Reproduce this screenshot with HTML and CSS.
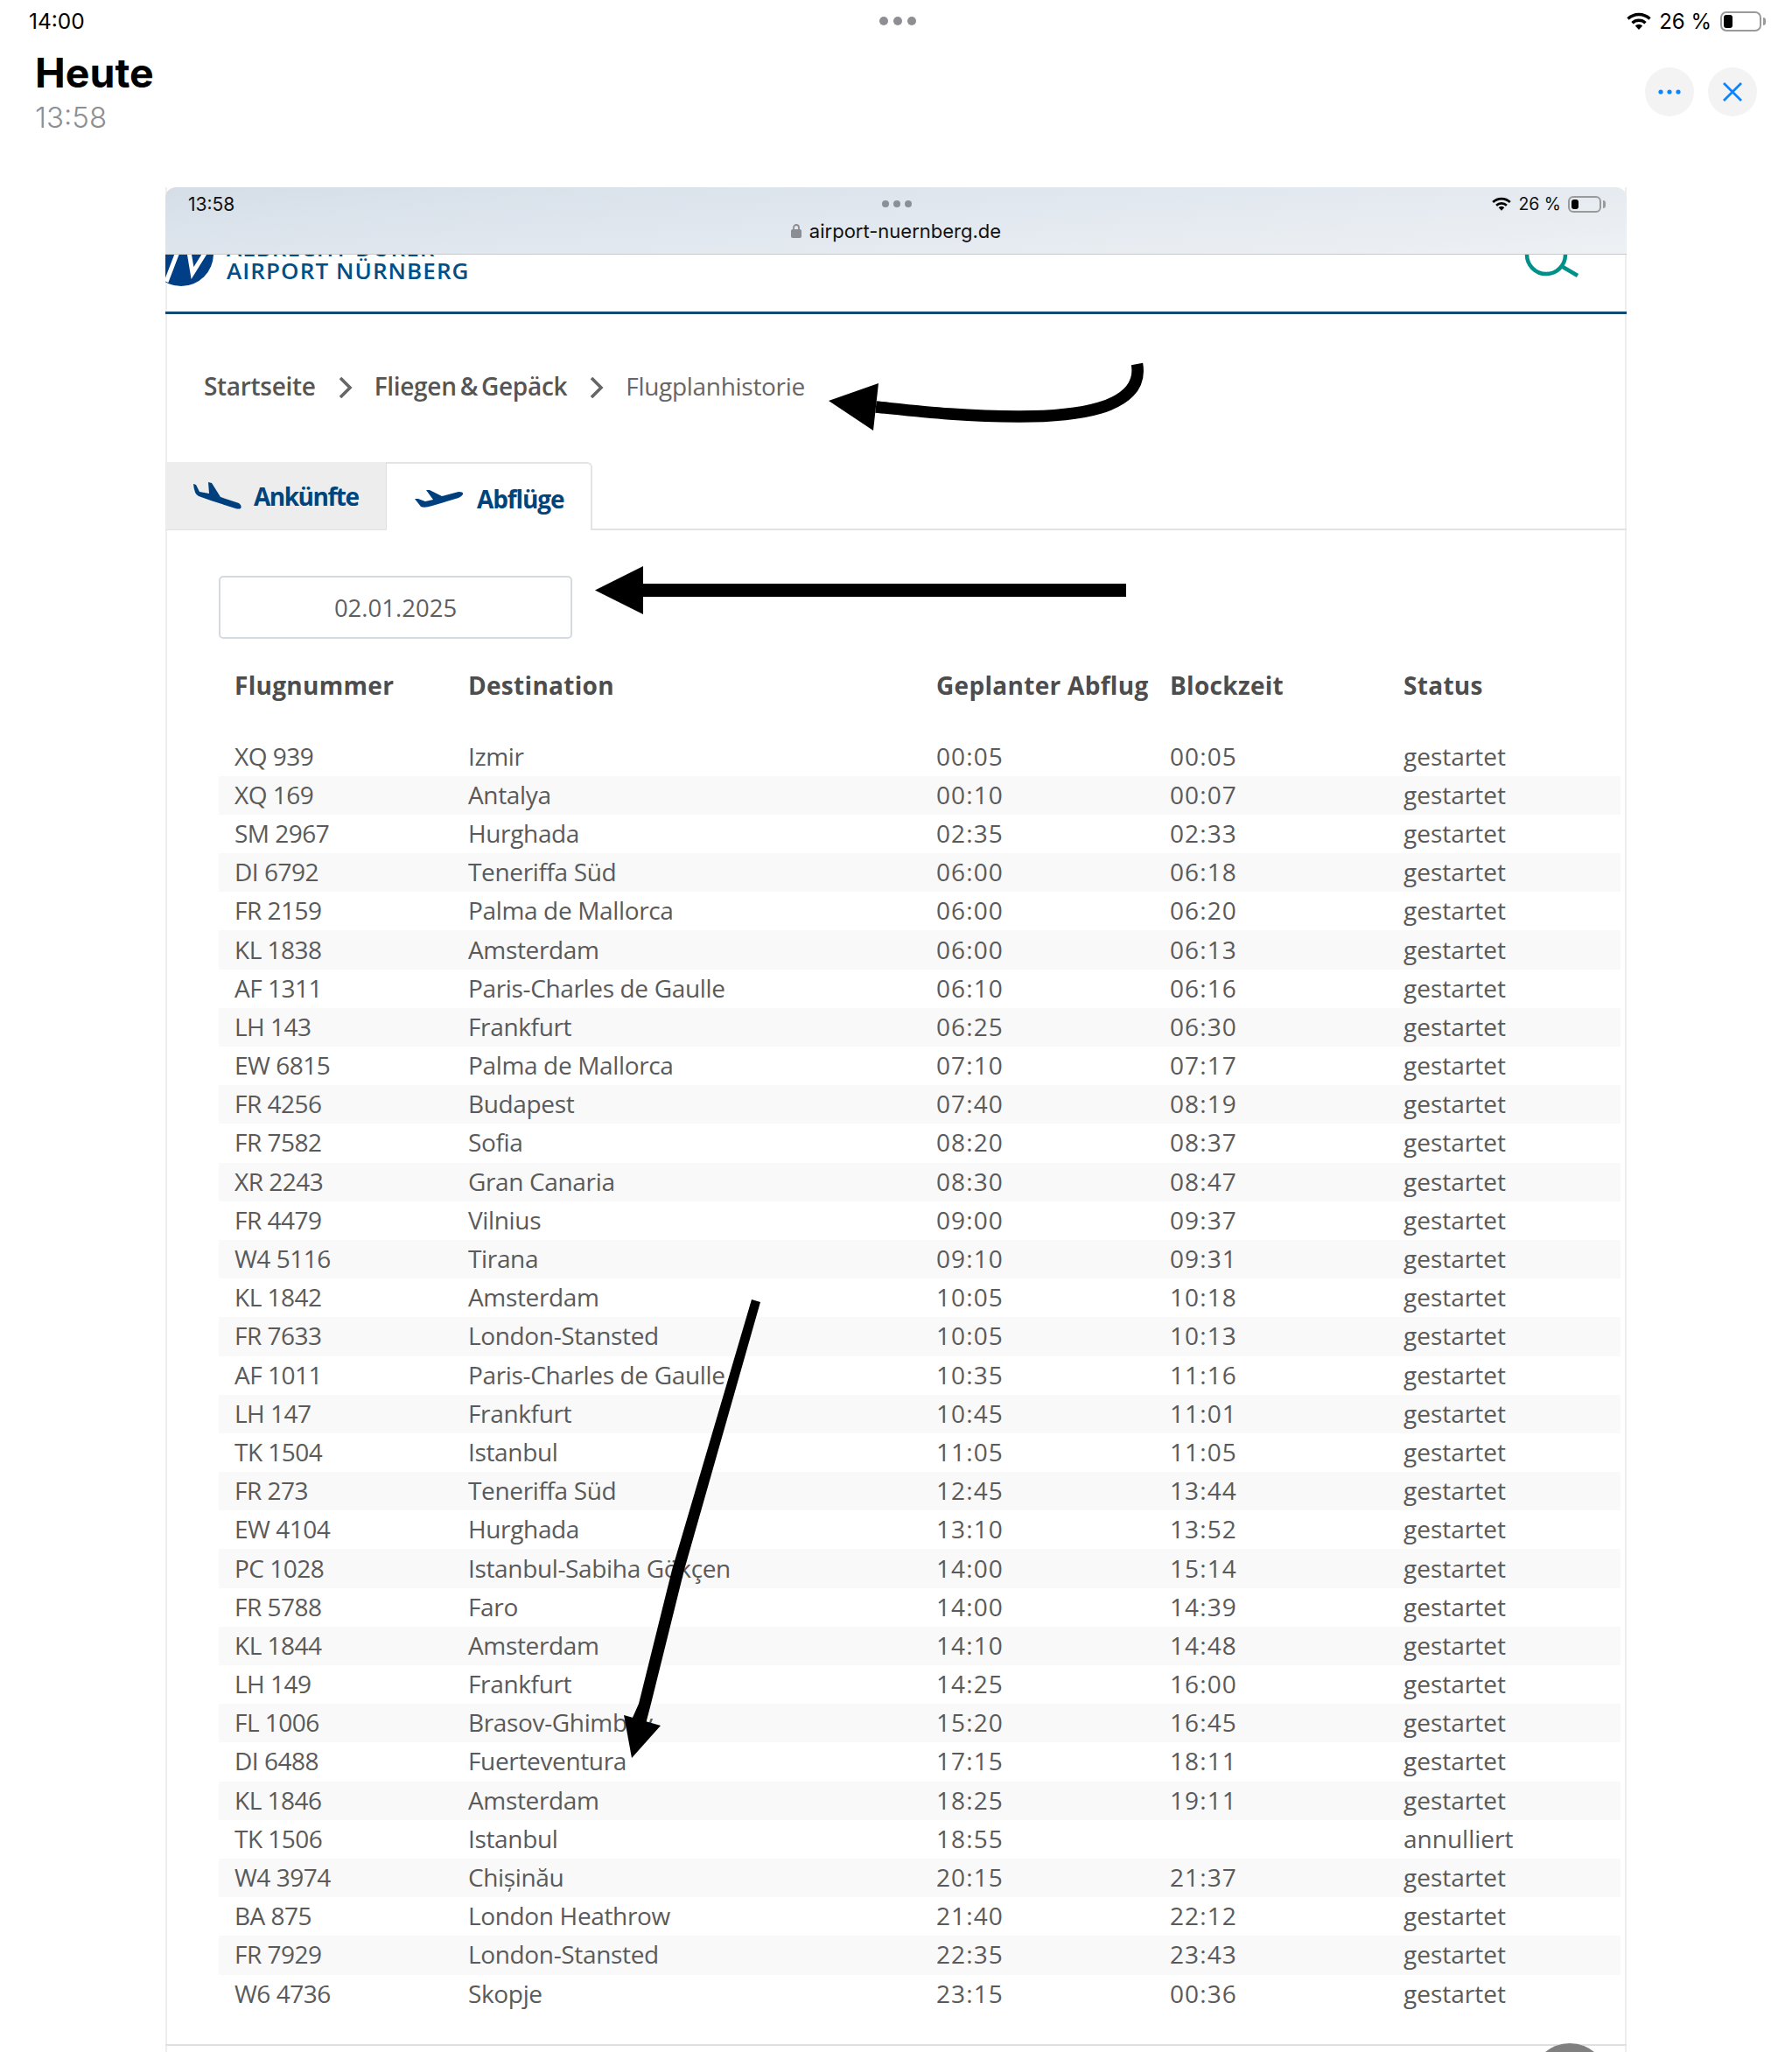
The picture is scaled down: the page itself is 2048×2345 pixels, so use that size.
FILE: index.html
```html
<!DOCTYPE html>
<html lang="de">
<head>
<meta charset="utf-8">
<title>Heute</title>
<link rel="stylesheet" href="styles.css">
</head>
<body>
<div class="status">
  <span class="status-time">14:00</span>
  <span class="dots"><i></i><i></i><i></i></span>
  <span class="status-right">
    <svg class="wifi" viewBox="0 0 28 20"><path d="M1.5 7.5a18 18 0 0 1 25 0M6.5 12.2a11 11 0 0 1 15 0" fill="none" stroke="#000" stroke-width="3.4"/><path d="M14 20l-4.2-4.6a6.4 6.4 0 0 1 8.4 0z" fill="#000"/></svg>
    <span class="pct">26 %</span>
    <span class="battery"><i></i></span>
  </span>
</div>
<header class="head">
  <div>
    <h1 class="title">Heute</h1>
    <div class="subtime">13:58</div>
  </div>
  <div class="actions">
    <button class="round">
      <svg class="ic" viewBox="0 0 26 6"><circle cx="3" cy="3" r="2.6"/><circle cx="13" cy="3" r="2.6"/><circle cx="23" cy="3" r="2.6"/></svg>
    </button>
    <button class="round">
      <svg class="ic-x" viewBox="0 0 22 22"><path d="M1 1l20 20M21 1L1 21"/></svg>
    </button>
  </div>
</header>

<main class="panel">
  <div class="bar">
    <div class="bar-status">
      <span class="bar-time">13:58</span>
      <span class="dots dots-small"><i></i><i></i><i></i></span>
      <span class="bar-right">
        <svg class="wifi-small" viewBox="0 0 28 20"><path d="M1.5 7.5a18 18 0 0 1 25 0M6.5 12.2a11 11 0 0 1 15 0" fill="none" stroke="#000" stroke-width="3.4"/><path d="M14 20l-4.2-4.6a6.4 6.4 0 0 1 8.4 0z" fill="#000"/></svg>
        <span class="pct-small">26 %</span>
        <span class="battery battery-small"><i></i></span>
      </span>
    </div>
    <div class="url">
      <svg class="lock" viewBox="0 0 12 17"><path d="M3 8V5a3 3 0 0 1 6 0v3" fill="none" stroke="#8a8d92" stroke-width="1.8"/><rect x="0" y="7" width="12" height="10" rx="2" fill="#8a8d92"/></svg>
      <span>airport-nuernberg.de</span>
    </div>
  </div>

  <div class="site-head">
    <svg class="logo" viewBox="189 291 56 37">
      <circle cx="207" cy="290" r="37" fill="#003f85"/>
      <path d="M203 288L190 322M216 288L220 312L235 288" fill="none" stroke="#fff" stroke-width="5"/>
    </svg>
    <div class="logo-text">
      <div class="logo-top">ALBRECHT DÜRER</div>
      <div class="logo-main">AIRPORT NÜRNBERG</div>
    </div>
    <svg class="search" viewBox="1740 291 66 26"><circle cx="1767" cy="291" r="22" fill="none" stroke="#00908a" stroke-width="4.5"/><path d="M1786 305L1803 315" fill="none" stroke="#00908a" stroke-width="4.5"/></svg>
  </div>

  <nav class="crumbs">
    <a class="crumb">Startseite</a>
    <svg class="chev" viewBox="0 0 16 24"><path d="M2 1l11 11L2 23"/></svg>
    <a class="crumb">Fliegen &amp; Gepäck</a>
    <svg class="chev" viewBox="0 0 16 24"><path d="M2 1l11 11L2 23"/></svg>
    <span class="crumb-current">Flugplanhistorie</span>
  </nav>

  <div class="tabs">
    <div class="tab tab-off">
      <svg class="plane" viewBox="219 551 58 33"><path d="M220 554L223 555L227 563L238 565L237 552L241 553L251 569L272 576Q276 579 274 582Q272 583 268 582L240 573L226 568Q221 566 220 554Z"/></svg>
      <span>Ankünfte</span>
    </div>
    <div class="tab tab-on">
      <svg class="plane" viewBox="473 557 58 24"><path d="M474 569L478 569L486 572L495 570L487 559L491 559L505 566L524 561Q530 561 529 564Q528 566 524 568L494 577Q485 580 481 578Z"/></svg>
      <span>Abflüge</span>
    </div>
  </div>

  <section class="content">
    <div class="date">02.01.2025</div>
    <div class="row row-head"><span>Flugnummer</span><span>Destination</span><span class="nowrap">Geplanter Abflug</span><span>Blockzeit</span><span>Status</span></div>
    <div class="rows">
      <div class="row"><span>XQ 939</span><span>Izmir</span><span>00:05</span><span>00:05</span><span>gestartet</span></div>
      <div class="row"><span>XQ 169</span><span>Antalya</span><span>00:10</span><span>00:07</span><span>gestartet</span></div>
      <div class="row"><span>SM 2967</span><span>Hurghada</span><span>02:35</span><span>02:33</span><span>gestartet</span></div>
      <div class="row"><span>DI 6792</span><span>Teneriffa Süd</span><span>06:00</span><span>06:18</span><span>gestartet</span></div>
      <div class="row"><span>FR 2159</span><span>Palma de Mallorca</span><span>06:00</span><span>06:20</span><span>gestartet</span></div>
      <div class="row"><span>KL 1838</span><span>Amsterdam</span><span>06:00</span><span>06:13</span><span>gestartet</span></div>
      <div class="row"><span>AF 1311</span><span>Paris-Charles de Gaulle</span><span>06:10</span><span>06:16</span><span>gestartet</span></div>
      <div class="row"><span>LH 143</span><span>Frankfurt</span><span>06:25</span><span>06:30</span><span>gestartet</span></div>
      <div class="row"><span>EW 6815</span><span>Palma de Mallorca</span><span>07:10</span><span>07:17</span><span>gestartet</span></div>
      <div class="row"><span>FR 4256</span><span>Budapest</span><span>07:40</span><span>08:19</span><span>gestartet</span></div>
      <div class="row"><span>FR 7582</span><span>Sofia</span><span>08:20</span><span>08:37</span><span>gestartet</span></div>
      <div class="row"><span>XR 2243</span><span>Gran Canaria</span><span>08:30</span><span>08:47</span><span>gestartet</span></div>
      <div class="row"><span>FR 4479</span><span>Vilnius</span><span>09:00</span><span>09:37</span><span>gestartet</span></div>
      <div class="row"><span>W4 5116</span><span>Tirana</span><span>09:10</span><span>09:31</span><span>gestartet</span></div>
      <div class="row"><span>KL 1842</span><span>Amsterdam</span><span>10:05</span><span>10:18</span><span>gestartet</span></div>
      <div class="row"><span>FR 7633</span><span>London-Stansted</span><span>10:05</span><span>10:13</span><span>gestartet</span></div>
      <div class="row"><span>AF 1011</span><span>Paris-Charles de Gaulle</span><span>10:35</span><span>11:16</span><span>gestartet</span></div>
      <div class="row"><span>LH 147</span><span>Frankfurt</span><span>10:45</span><span>11:01</span><span>gestartet</span></div>
      <div class="row"><span>TK 1504</span><span>Istanbul</span><span>11:05</span><span>11:05</span><span>gestartet</span></div>
      <div class="row"><span>FR 273</span><span>Teneriffa Süd</span><span>12:45</span><span>13:44</span><span>gestartet</span></div>
      <div class="row"><span>EW 4104</span><span>Hurghada</span><span>13:10</span><span>13:52</span><span>gestartet</span></div>
      <div class="row"><span>PC 1028</span><span>Istanbul-Sabiha Gökçen</span><span>14:00</span><span>15:14</span><span>gestartet</span></div>
      <div class="row"><span>FR 5788</span><span>Faro</span><span>14:00</span><span>14:39</span><span>gestartet</span></div>
      <div class="row"><span>KL 1844</span><span>Amsterdam</span><span>14:10</span><span>14:48</span><span>gestartet</span></div>
      <div class="row"><span>LH 149</span><span>Frankfurt</span><span>14:25</span><span>16:00</span><span>gestartet</span></div>
      <div class="row"><span>FL 1006</span><span>Brasov-Ghimbav</span><span>15:20</span><span>16:45</span><span>gestartet</span></div>
      <div class="row"><span>DI 6488</span><span>Fuerteventura</span><span>17:15</span><span>18:11</span><span>gestartet</span></div>
      <div class="row"><span>KL 1846</span><span>Amsterdam</span><span>18:25</span><span>19:11</span><span>gestartet</span></div>
      <div class="row"><span>TK 1506</span><span>Istanbul</span><span>18:55</span><span></span><span>annulliert</span></div>
      <div class="row"><span>W4 3974</span><span>Chișinău</span><span>20:15</span><span>21:37</span><span>gestartet</span></div>
      <div class="row"><span>BA 875</span><span>London Heathrow</span><span>21:40</span><span>22:12</span><span>gestartet</span></div>
      <div class="row"><span>FR 7929</span><span>London-Stansted</span><span>22:35</span><span>23:43</span><span>gestartet</span></div>
      <div class="row"><span>W6 4736</span><span>Skopje</span><span>23:15</span><span>00:36</span><span>gestartet</span></div>
    </div>
  </section>
</main>

<svg class="marks" viewBox="0 0 2048 2345" width="2048" height="2345">
  <path d="M1299.5 416C1309 470 1220 476 1165 476C1100 476 1050 470 1001 465" fill="none" stroke="#000" stroke-width="13.5"/>
  <path d="M947 458L1004 438L998 492Z"/>
  <path d="M735 647V702L680 674.5Z"/>
  <rect x="733" y="667" width="554" height="15"/>
  <path d="M859 1485L869 1488L782 1794L744 1947L738 1970L722 1965L730 1947L768 1794Z"/>
  <path d="M713 1960L755 1972L722 2009Z"/>
  <circle class="fab" cx="1794" cy="2379" r="44"/>
</svg>
</body>
</html>
```

FILE: styles.css
```css
* { box-sizing: border-box; }
html, body { margin: 0; padding: 0; }
body {
  position: relative;
  width: 2048px;
  height: 2345px;
  overflow: hidden;
  background: #fff;
  font-family: "Open Sans", "Noto Sans", sans-serif;
  color: #5a5a5a;
}

/* device status */
.status {
  display: grid;
  grid-template-columns: 1fr auto 1fr;
  align-items: center;
  height: 48px;
  padding: 0 30px 0 33px;
  font-family: Inter, "Liberation Sans", sans-serif;
  color: #000;
}
.status-time { font-size: 24.5px; }
.status-right { display: flex; align-items: center; justify-content: flex-end; }
.wifi { width: 28px; height: 20px; margin-right: 9px; }
.pct { font-size: 24px; margin-right: 10px; white-space: nowrap; }
.dots { display: flex; gap: 6px; }
.dots i { width: 10px; height: 10px; border-radius: 50%; background: #8e8e93; }
.dots-small { gap: 5px; }
.dots-small i { width: 8px; height: 8px; background: #8a9098; }

.battery {
  position: relative;
  display: block;
  width: 47px;
  height: 23px;
  border: 2px solid #9a9a9a;
  border-radius: 7px;
  margin-right: 5px;
}
.battery i {
  position: absolute;
  left: 2px;
  top: 2px;
  bottom: 2px;
  width: 10px;
  background: #000;
  border-radius: 3px;
}
.battery::after {
  content: "";
  position: absolute;
  right: -7px;
  top: 5px;
  width: 3px;
  height: 9px;
  background: #9a9a9a;
  border-radius: 0 3px 3px 0;
}
.battery-small { width: 38px; height: 19px; border-radius: 6px; }
.battery-small i { width: 8px; }
.battery-small::after { top: 3px; height: 9px; right: -7px; }

/* header */
.head {
  display: flex;
  justify-content: space-between;
  align-items: flex-start;
  height: 166px;
  padding: 0 40px 0 40px;
  font-family: Inter, "Liberation Sans", sans-serif;
}
.title { margin: 8px 0 0; font-size: 46.5px; line-height: 54px; font-weight: 700; color: #000; }
.subtime { font-size: 33px; line-height: 40px; margin-top: 4px; color: #8e8e93; font-weight: 300; }
.actions { display: flex; gap: 16px; margin-top: 29px; }
.round {
  display: flex;
  align-items: center;
  justify-content: center;
  width: 56px;
  height: 56px;
  padding: 0;
  border: 0;
  border-radius: 50%;
  background: #f3f3f4;
}
.ic { width: 26px; height: 6px; fill: #0a84ff; }
.ic-x { width: 22px; height: 22px; fill: none; stroke: #0a84ff; stroke-width: 2.8; }

/* screenshot panel */
.panel {
  width: 1670px;
  margin-left: 189px;
  height: 2131px;
  border-left: 2px solid #eeeeee;
  border-right: 2px solid #eeeeee;
}
.bar {
  height: 77px;
  margin: 0 -2px;
  border-radius: 12px 12px 0 0;
  border-bottom: 1px solid #c8c9cb;
  background: linear-gradient(175deg, #d5dee7 0%, #dfe6ee 40%, #eef1f4 100%);
  font-family: Inter, "Liberation Sans", sans-serif;
  color: #111;
}
.bar-status {
  display: grid;
  grid-template-columns: 1fr auto 1fr;
  align-items: center;
  height: 38px;
  padding: 0 24px 0 26px;
}
.bar-time { font-size: 21px; }
.bar-right { display: flex; align-items: center; justify-content: flex-end; }
.wifi-small { width: 22px; height: 16px; margin-right: 8px; }
.pct-small { font-size: 19.5px; margin-right: 8px; white-space: nowrap; }
.url {
  display: flex;
  align-items: center;
  justify-content: center;
  gap: 9px;
  height: 23px;
  font-size: 22px;
}
.lock { width: 12px; height: 17px; }

.site-head {
  position: relative;
  display: flex;
  height: 68px;
  margin: 0 -2px;
  border-bottom: 3px solid #134a73;
  overflow: hidden;
}
.logo { width: 56px; height: 37px; }
.logo-text { margin: -21px 0 0 14px; color: #004f86; font-weight: 600; font-size: 26px; line-height: 26px; letter-spacing: 1.1px; white-space: nowrap; }
.logo-top, .logo-main { height: 26px; }
.search { position: absolute; left: 1551px; top: 0; width: 66px; height: 26px; }

.crumbs {
  display: flex;
  align-items: center;
  height: 169px;
  padding: 0 0 6px 42px;
  font-size: 28px;
  letter-spacing: -.3px;
}
.crumb { font-weight: 600; color: #555; word-spacing: -3px; }
.crumb-current { color: #666; }
.chev { width: 16px; height: 24px; margin: 4px 25px 0 26px; fill: none; stroke: #666; stroke-width: 3.6; }

.tabs {
  display: flex;
  height: 78px;
  border-bottom: 2px solid #e2e2e2;
  margin: 0 -2px;
  color: #00447c;
  font-weight: 700;
  font-size: 28px;
  letter-spacing: -1.1px;
}
.tab { display: flex; align-items: center; }
.tab-off { width: 253px; padding-left: 31px; background: #ededed; gap: 12px; height: 77px; border-right: 1px solid #e0e0e0; letter-spacing: -1.5px; }
.tab-on {
  width: 235px;
  height: 78px;
  padding: 3px 0 0 31px;
  gap: 14px;
  background: #fff;
  border: 2px solid #e4e4e4;
  border-bottom: 0;
  border-left: 0;
  border-top-right-radius: 6px;
}
.plane { fill: #003f7d; width: 58px; height: auto; }

.content {
  height: 1732px;
  margin: 0 -2px;
  padding: 52px 7px 0 61px;
  border-bottom: 2px solid #e0e0e0;
}
.date {
  display: flex;
  align-items: center;
  justify-content: center;
  width: 404px;
  height: 72px;
  border: 2px solid #d5dae0;
  border-radius: 5px;
  font-size: 27.5px;
  color: #5f5f5f;
}
.row {
  display: grid;
  grid-template-columns: 267px 535px 267px 267px 266px;
  align-items: center;
  height: 44.2px;
  font-size: 28px;
  color: #5a5a5a;
}
.row span { padding: 0 0 2px 18px; white-space: nowrap; }
.rows .row:nth-child(even) { background: #f9f9f9; }
.rows .row span:nth-child(1) { letter-spacing: -.5px; }
.rows .row span:nth-child(2) { letter-spacing: -.35px; }
.rows .row span:nth-child(3), .rows .row span:nth-child(4) { letter-spacing: 1.1px; }
.row-head { height: 48px; margin-top: 30px; margin-bottom: 34.5px; font-weight: 700; letter-spacing: .3px; color: #4d4d4d; }

/* hand-drawn marks over the screenshot */
.marks { position: absolute; left: 0; top: 0; pointer-events: none; }
.fab { fill: #808080; }
```
